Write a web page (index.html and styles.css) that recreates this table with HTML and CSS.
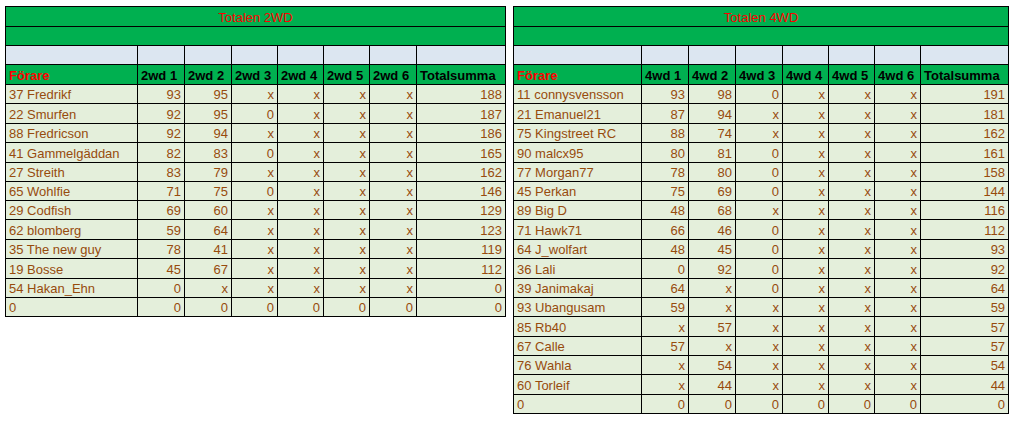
FILE: index.html
```html
<!DOCTYPE html>
<html lang="sv">
<head>
<meta charset="utf-8">
<title>Totalen</title>
<link rel="stylesheet" href="styles.css">
</head>
<body>
<div class="sheets">
  <table class="sheet left">
    <colgroup>
      <col class="c-name-l"><col class="c47"><col class="c47"><col class="c46"><col class="c46"><col class="c46"><col class="c47"><col class="c-tot-l">
    </colgroup>
    <tr class="r-title"><td colspan="8" class="title">Totalen 2WD</td></tr>
    <tr class="r-green"><td colspan="8" class="green"></td></tr>
    <tr class="r-blue"><td class="blue"></td><td class="blue"></td><td class="blue"></td><td class="blue"></td><td class="blue"></td><td class="blue"></td><td class="blue"></td><td class="blue"></td></tr>
    <tr class="r-head"><th class="driver">Förare</th><th>2wd 1</th><th>2wd 2</th><th>2wd 3</th><th>2wd 4</th><th>2wd 5</th><th>2wd 6</th><th>Totalsumma</th></tr>
    <tr><td>37 Fredrikf</td><td>93</td><td>95</td><td>x</td><td>x</td><td>x</td><td>x</td><td>188</td></tr>
    <tr class="tall"><td>22 Smurfen</td><td>92</td><td>95</td><td>0</td><td>x</td><td>x</td><td>x</td><td>187</td></tr>
    <tr><td>88 Fredricson</td><td>92</td><td>94</td><td>x</td><td>x</td><td>x</td><td>x</td><td>186</td></tr>
    <tr class="tall"><td>41 Gammelgäddan</td><td>82</td><td>83</td><td>0</td><td>x</td><td>x</td><td>x</td><td>165</td></tr>
    <tr><td>27 Streith</td><td>83</td><td>79</td><td>x</td><td>x</td><td>x</td><td>x</td><td>162</td></tr>
    <tr><td>65 Wohlfie</td><td>71</td><td>75</td><td>0</td><td>x</td><td>x</td><td>x</td><td>146</td></tr>
    <tr><td>29 Codfish</td><td>69</td><td>60</td><td>x</td><td>x</td><td>x</td><td>x</td><td>129</td></tr>
    <tr class="tall"><td>62 blomberg</td><td>59</td><td>64</td><td>x</td><td>x</td><td>x</td><td>x</td><td>123</td></tr>
    <tr><td>35 The new guy</td><td>78</td><td>41</td><td>x</td><td>x</td><td>x</td><td>x</td><td>119</td></tr>
    <tr class="tall"><td>19 Bosse</td><td>45</td><td>67</td><td>x</td><td>x</td><td>x</td><td>x</td><td>112</td></tr>
    <tr><td>54 Hakan_Ehn</td><td>0</td><td>x</td><td>x</td><td>x</td><td>x</td><td>x</td><td>0</td></tr>
    <tr><td>0</td><td>0</td><td>0</td><td>0</td><td>0</td><td>0</td><td>0</td><td>0</td></tr>
  </table>

  <table class="sheet right">
    <colgroup>
      <col class="c-name-r"><col class="c47"><col class="c47"><col class="c47"><col class="c46"><col class="c46"><col class="c46"><col class="c-tot-r">
    </colgroup>
    <tr class="r-title"><td colspan="8" class="title">Totalen 4WD</td></tr>
    <tr class="r-green"><td colspan="8" class="green"></td></tr>
    <tr class="r-blue"><td class="blue"></td><td class="blue"></td><td class="blue"></td><td class="blue"></td><td class="blue"></td><td class="blue"></td><td class="blue"></td><td class="blue"></td></tr>
    <tr class="r-head"><th class="driver">Förare</th><th>4wd 1</th><th>4wd 2</th><th>4wd 3</th><th>4wd 4</th><th>4wd 5</th><th>4wd 6</th><th>Totalsumma</th></tr>
    <tr><td>11 connysvensson</td><td>93</td><td>98</td><td>0</td><td>x</td><td>x</td><td>x</td><td>191</td></tr>
    <tr class="tall"><td>21 Emanuel21</td><td>87</td><td>94</td><td>x</td><td>x</td><td>x</td><td>x</td><td>181</td></tr>
    <tr><td>75 Kingstreet RC</td><td>88</td><td>74</td><td>x</td><td>x</td><td>x</td><td>x</td><td>162</td></tr>
    <tr class="tall"><td>90 malcx95</td><td>80</td><td>81</td><td>0</td><td>x</td><td>x</td><td>x</td><td>161</td></tr>
    <tr><td>77 Morgan77</td><td>78</td><td>80</td><td>0</td><td>x</td><td>x</td><td>x</td><td>158</td></tr>
    <tr><td>45 Perkan</td><td>75</td><td>69</td><td>0</td><td>x</td><td>x</td><td>x</td><td>144</td></tr>
    <tr><td>89 Big D</td><td>48</td><td>68</td><td>x</td><td>x</td><td>x</td><td>x</td><td>116</td></tr>
    <tr class="tall"><td>71 Hawk71</td><td>66</td><td>46</td><td>0</td><td>x</td><td>x</td><td>x</td><td>112</td></tr>
    <tr><td>64 J_wolfart</td><td>48</td><td>45</td><td>0</td><td>x</td><td>x</td><td>x</td><td>93</td></tr>
    <tr class="tall"><td>36 Lali</td><td>0</td><td>92</td><td>0</td><td>x</td><td>x</td><td>x</td><td>92</td></tr>
    <tr><td>39 Janimakaj</td><td>64</td><td>x</td><td>0</td><td>x</td><td>x</td><td>x</td><td>64</td></tr>
    <tr><td>93 Ubangusam</td><td>59</td><td>x</td><td>x</td><td>x</td><td>x</td><td>x</td><td>59</td></tr>
    <tr class="tall"><td>85 Rb40</td><td>x</td><td>57</td><td>x</td><td>x</td><td>x</td><td>x</td><td>57</td></tr>
    <tr><td>67 Calle</td><td>57</td><td>x</td><td>x</td><td>x</td><td>x</td><td>x</td><td>57</td></tr>
    <tr><td>76 Wahla</td><td>x</td><td>54</td><td>x</td><td>x</td><td>x</td><td>x</td><td>54</td></tr>
    <tr class="tall"><td>60 Torleif</td><td>x</td><td>44</td><td>x</td><td>x</td><td>x</td><td>x</td><td>44</td></tr>
    <tr><td>0</td><td>0</td><td>0</td><td>0</td><td>0</td><td>0</td><td>0</td><td>0</td></tr>
  </table>
</div>
</body>
</html>
```

FILE: styles.css
```css
html, body {
  margin: 0;
  padding: 0;
  background: #ffffff;
}

body {
  padding: 6px 0 0 5px;
  font-family: "Liberation Sans", Arial, sans-serif;
  font-size: 13px;
}

.sheets {
  display: flex;
  align-items: flex-start;
  gap: 7px;
}

.sheet {
  border-collapse: separate;
  border-spacing: 0;
  table-layout: fixed;
  border-left: 1px solid #000;
  border-top: 1px solid #000;
}

.sheet.left { width: 501px; }
.sheet.right { width: 496px; }

.c-name-l { width: 132px; }
.c-name-r { width: 128px; }
.c47 { width: 47px; }
.c46 { width: 46px; }
.c-tot-l { width: 89px; }
.c-tot-r { width: 88px; }

.sheet td,
.sheet th {
  box-sizing: border-box;
  border-right: 1px solid #000;
  border-bottom: 1px solid #000;
  padding: 0 3px 1px 3px;
  line-height: 15px;
  vertical-align: bottom;
  white-space: nowrap;
  overflow: hidden;
}

.sheet tr { height: 19px; }
.sheet tr.tall { height: 20px; }
.sheet tr.r-title { height: 20px; }
.sheet tr.r-green { height: 19px; }
.sheet tr.r-blue { height: 19px; }
.sheet tr.r-head { height: 20px; }

.sheet td {
  background: #e4efdb;
  color: #974b0d;
  text-align: right;
}

.sheet td:first-child {
  text-align: left;
}

.sheet td.title {
  background: #00b050;
  color: #ff0000;
  text-align: center;
}

.sheet td.green {
  background: #00b050;
}

.sheet td.blue {
  background: #dce6f1;
}

.sheet th {
  background: #00b050;
  color: #000000;
  font-weight: bold;
  text-align: left;
}

.sheet th.driver {
  color: #ff0000;
}
```
